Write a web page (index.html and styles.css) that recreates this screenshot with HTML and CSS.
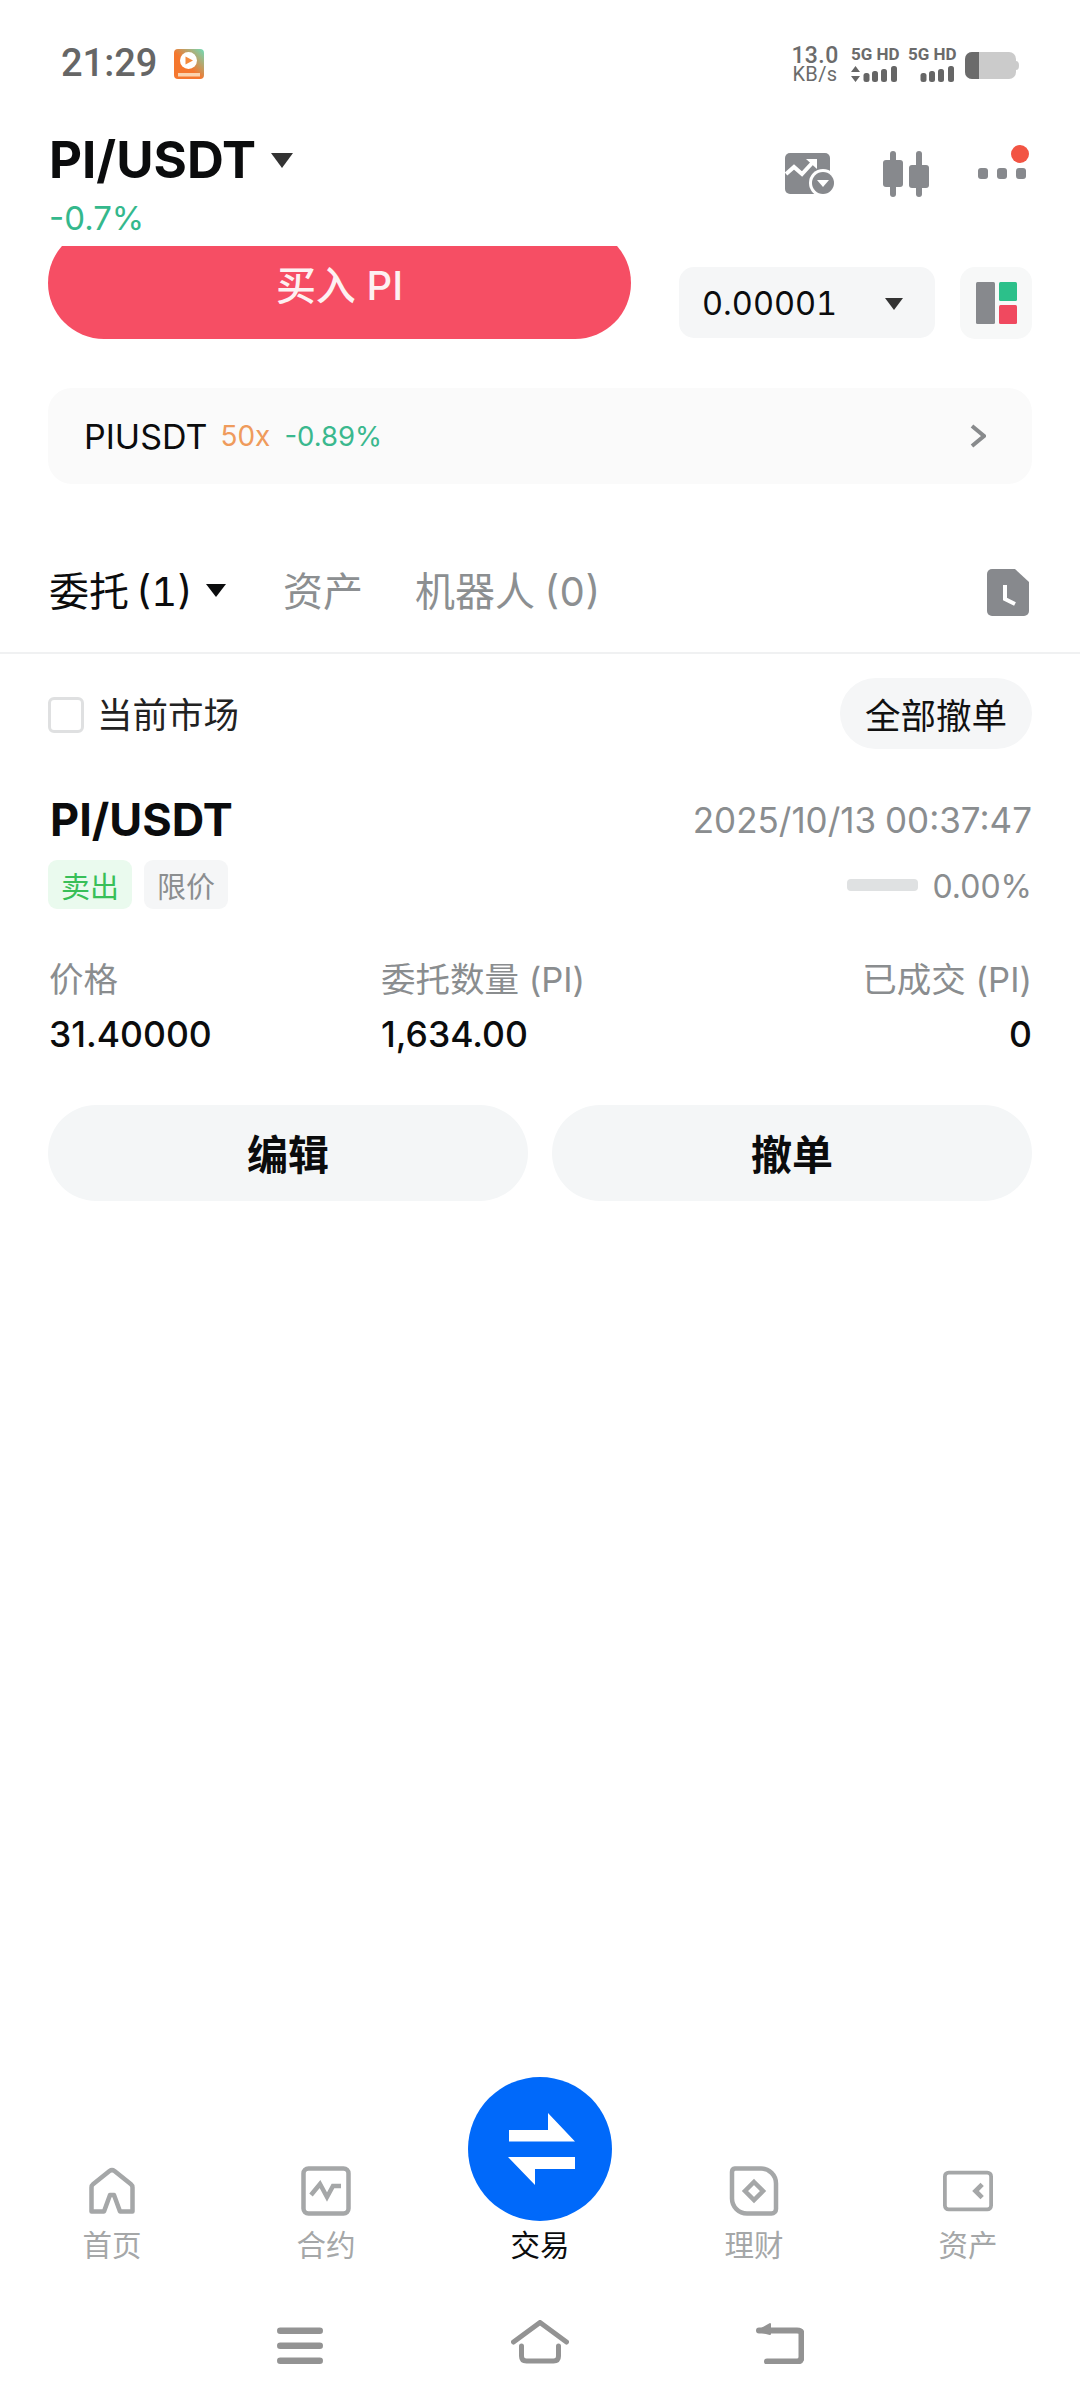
FILE: index.html
```html
<!DOCTYPE html>
<html lang="zh">
<head>
<meta charset="utf-8">
<title>PI/USDT</title>
<link rel="stylesheet" href="styles.css">
</head>
<body>
<div class="page">
  <header class="status">
    <span class="clock">21:29</span>
    <svg class="app-icon" viewBox="0 0 30 30">
      <defs><linearGradient id="appg" x1="0" y1="1" x2="1" y2="0"><stop offset="0.45" stop-color="#f5772e"/><stop offset="1" stop-color="#6fdcb8"/></linearGradient></defs>
      <rect width="30" height="30" rx="4" fill="url(#appg)"/>
      <circle cx="14.5" cy="11.5" r="8.5" fill="#fff"/>
      <path d="M11.5 7.5 19 11.5 11.5 15.5Z" fill="#f58a3c"/>
      <rect x="4" y="24" width="22" height="3.5" fill="#fbd3ae"/>
    </svg>
    <div class="status-right">
      <div class="speed"><span>13.0</span><span class="speed-unit">KB/s</span></div>
      <div class="sim">
        <span class="sim-label">5G HD</span>
        <svg class="sig" viewBox="0 0 47 16"><path d="M4.500 0 9 6H0ZM4.500 16 0 10H9Z" fill="#666"/><rect x="12.500" y="7" width="6" height="9" rx="2.500" fill="#666"/><rect x="21" y="5" width="6" height="11" rx="2.500" fill="#666"/><rect x="30" y="3" width="6" height="13" rx="2.500" fill="#666"/><rect x="40" y="0" width="6" height="16" rx="2.500" fill="#666"/></svg>
      </div>
      <div class="sim">
        <span class="sim-label">5G HD</span>
        <svg class="sig" viewBox="0 0 47 16"><rect x="12.500" y="7" width="6" height="9" rx="2.500" fill="#666"/><rect x="21" y="5" width="6" height="11" rx="2.500" fill="#666"/><rect x="30" y="3" width="6" height="13" rx="2.500" fill="#666"/><rect x="40" y="0" width="6" height="16" rx="2.500" fill="#666"/></svg>
      </div>
      <svg class="battery" viewBox="0 0 54 27"><rect width="51" height="27" rx="7" fill="#cbcbcb"/><path d="M7 0H14V27H7A7 7 0 0 1 0 20V7A7 7 0 0 1 7 0Z" fill="#6b6b6b"/><path d="M51 9a3 4.500 0 0 1 0 9Z" fill="#cbcbcb"/></svg>
    </div>
  </header>

  <section class="market">
    <div class="market-info">
      <div class="pair"><h1 class="pair-name">PI/USDT</h1><i class="tri tri-lg"></i></div>
      <div class="pair-change">-0.7%</div>
    </div>
    <div class="tools">
      <svg class="tool-chart" viewBox="0 0 50 45">
        <rect y="2" width="45" height="41" rx="5" fill="#87898d"/>
        <path d="M1 23 9 16 17 23 29 10" fill="none" stroke="#fff" stroke-width="4"/>
        <path d="M21 8H32V18Z" fill="#fff"/>
        <circle cx="38" cy="32" r="14" fill="#fff"/><circle cx="38" cy="32" r="11" fill="#87898d"/>
        <path d="M32 29H44L38 36Z" fill="#fff"/>
      </svg>
      <svg class="tool-candle" viewBox="0 0 46 46">
        <g fill="#87898d"><rect x="7" width="6" height="46" rx="3"/><rect y="9" width="20" height="27" rx="3"/><rect x="33" width="6" height="46" rx="3"/><rect x="26" y="14" width="20" height="23" rx="3"/></g>
      </svg>
      <div class="tool-more"><i class="dot"></i><i class="dot"></i><i class="dot"></i><i class="badge"></i></div>
    </div>
  </section>

  <section class="trade">
    <div class="buy-clip"><button class="buy">买入 PI</button></div>
    <div class="select"><span>0.00001</span><i class="tri tri-md"></i></div>
    <div class="layout-btn">
      <svg viewBox="0 0 41 42"><rect width="19" height="42" rx="1.500" fill="#87898d"/><rect x="23" width="18" height="19" rx="1.500" fill="#2cc08a"/><rect x="23" y="23" width="18" height="19" rx="1.500" fill="#f0495f"/></svg>
    </div>
  </section>

  <a class="contract">
    <span class="contract-name">PIUSDT</span>
    <span class="contract-lev">50x</span>
    <span class="contract-chg">-0.89%</span>
    <svg class="chev" viewBox="0 0 16 24"><path d="M2 2 14 12 2 22" fill="none" stroke="#888a8c" stroke-width="4"/></svg>
  </a>

  <nav class="tabs">
    <span class="tab tab-on">委托 (1)</span><i class="tri tri-tab"></i>
    <span class="tab tab-assets">资产</span>
    <span class="tab tab-bots">机器人 (0)</span>
    <svg class="doc" viewBox="0 0 42 47"><path d="M5 0H28L42 13V42A5 5 0 0 1 37 47H5A5 5 0 0 1 0 42V5A5 5 0 0 1 5 0Z" fill="#87898d"/><path d="M18 16V30L28 35" fill="none" stroke="#fff" stroke-width="4"/></svg>
  </nav>

  <section class="filter">
    <label class="check"><i class="box"></i><span class="check-label">当前市场</span></label>
    <button class="cancel-all">全部撤单</button>
  </section>

  <section class="order">
    <div class="order-head">
      <div>
        <div class="order-pair">PI/USDT</div>
        <div class="tags"><span class="tag tag-sell">卖出</span><span class="tag tag-type">限价</span></div>
      </div>
      <div class="order-side">
        <div class="order-time">2025/10/13 00:37:47</div>
        <div class="progress"><i class="bar"></i><span class="progress-val">0.00%</span></div>
      </div>
    </div>
    <div class="fields">
      <span class="f-label">价格</span><span class="f-label">委托数量 (PI)</span><span class="f-label f-end">已成交 (PI)</span>
      <span class="f-val">31.40000</span><span class="f-val">1,634.00</span><span class="f-val f-end">0</span>
    </div>
    <div class="actions"><button class="act">编辑</button><button class="act">撤单</button></div>
  </section>

  <div class="spacer"></div>

  <nav class="bottom">
    <div class="item">
      <svg class="nav-i" viewBox="0 0 50 50"><path d="M4.500 45.500V21.500Q4.500 19.500 6 18.300L22.500 5Q25 3.200 27.500 5L44 18.300Q45.500 19.500 45.500 21.500V45.500H33L27 29H23L17 45.500Z" fill="none" stroke="#a5a7a8" stroke-width="4.500" stroke-linejoin="round"/></svg>
      <span>首页</span>
    </div>
    <div class="item">
      <svg class="nav-i" viewBox="0 0 50 50"><rect x="2.500" y="2.500" width="45" height="45" rx="5" fill="none" stroke="#a5a7a8" stroke-width="4.500"/><path d="M10 29 19 18 26 31 32 20H40" fill="none" stroke="#a5a7a8" stroke-width="4.500"/></svg>
      <span>合约</span>
    </div>
    <div class="item item-on">
      <div class="swap">
        <svg viewBox="0 0 144 144"><path d="M41 53H80V36L107 64.500H41Z" fill="#fff"/><path d="M107 78H40L67 106V90H107Z" fill="#fff" transform="translate(0 2)"/></svg>
      </div>
      <span>交易</span>
    </div>
    <div class="item">
      <svg class="nav-i" viewBox="0 0 50 50"><path d="M6 2.500H32A15 15 0 0 1 47 17.500V43A4.500 4.500 0 0 1 42.500 47.500H18A15 15 0 0 1 3 32.500V6A3.500 3.500 0 0 1 6 2.500Z" fill="none" stroke="#a5a7a8" stroke-width="4.500"/><path d="M25 16 34 25 25 34 16 25Z" fill="none" stroke="#a5a7a8" stroke-width="4.500"/></svg>
      <span>理财</span>
    </div>
    <div class="item">
      <svg class="nav-i nav-wide" viewBox="0 0 53 50"><rect x="2" y="5.500" width="49" height="39" rx="4" fill="none" stroke="#a5a7a8" stroke-width="4"/><path d="M41.500 18 34.500 25 41.500 32" fill="none" stroke="#a5a7a8" stroke-width="5"/></svg>
      <span>资产</span>
    </div>
  </nav>

  <footer class="sys">
    <svg class="sys-menu" viewBox="0 0 46 43"><g fill="#939393"><rect y="7" width="46" height="6.500" rx="3.250"/><rect y="22" width="46" height="6.500" rx="3.250"/><rect y="37" width="46" height="6.500" rx="3.250"/></g></svg>
    <svg class="sys-home" viewBox="0 0 58 44"><path d="M2.500 22 29 2.500 55.500 22M10.500 26V36Q10.500 41 15.500 41H42.500Q47.500 41 47.500 36V26" fill="none" stroke="#939393" stroke-width="5" stroke-linecap="round"/></svg>
    <svg class="sys-back" viewBox="0 0 48 42"><path d="M11 39.500H41Q45.500 39.500 45.500 35V12Q45.500 8.500 41 8.500H3" fill="none" stroke="#939393" stroke-width="6" stroke-linecap="round"/><path d="M2 9 14 2V12Z" fill="#939393" stroke="#939393" stroke-width="2" stroke-linejoin="round"/></svg>
  </footer>
</div>
</body>
</html>
```
FILE: styles.css
```css
* { box-sizing: border-box; }
html, body { margin: 0; padding: 0; background: #fff; }
body { font-family: "Inter", "Noto Sans CJK SC", "Liberation Sans", sans-serif; color: #0b0c0d; }
button { font: inherit; border: 0; padding: 0; color: inherit; }
i { display: block; }
h1 { margin: 0; }
svg { display: block; flex: none; }

.page { width: 1080px; height: 2408px; display: flex; flex-direction: column; overflow: hidden; }

/* status bar */
.status { height: 100px; padding: 41px 61px 0 61px; display: flex; align-items: flex-start; }
.clock { font: 500 38px/45px "Roboto", sans-serif; color: #666; }
.app-icon { width: 30px; height: 30px; margin: 8px 0 0 17px; }
.status-right { margin-left: auto; display: flex; align-items: flex-start; margin-top: 5px; }
.speed { width: 44px; display: flex; flex-direction: column; font: 500 23px/20px "Roboto", sans-serif; color: #6b6b6b; align-items: center; letter-spacing: 0.4px; }
.speed-unit { font-size: 20px; line-height: 17px; font-weight: 400; }
.sim { width: 47px; margin-left: 14px; display: flex; flex-direction: column; gap: 4px; }
.sim + .sim { margin-left: 10px; }
.sim-label { font: 700 17px/16px "Roboto", sans-serif; color: #6b6b6b; white-space: nowrap; }
.sig { width: 47px; height: 16px; }
.battery { width: 54px; height: 27px; margin: 6px 0 0 10px; }

/* triangles */
.tri { width: 0; height: 0; border-style: solid; border-color: #333 transparent transparent; border-bottom-width: 0; }
.tri-lg { border-width: 15px 11px 0; margin-left: 15px; }
.tri-md { border-width: 12px 9px 0; margin-left: auto; }
.tri-tab { border-width: 13px 10px 0; border-top-color: #0b0c0d; margin-left: 13px; margin-top: -4px; }

/* market header */
.market { height: 146px; padding: 32px 54px 0 49px; display: flex; justify-content: space-between; }
.pair { display: flex; align-items: center; height: 56px; }
.pair-name { font-size: 51px; line-height: 56px; font-weight: 700; }
.pair-change { margin-top: 10px; font-size: 33px; line-height: 40px; color: #34b88c; }
.tools { display: flex; height: 56px; position: relative; }
.tool-chart { width: 50px; height: 45px; margin-top: 19px; }
.tool-candle { width: 46px; height: 46px; margin: 19px 0 0 48px; }
.tool-more { margin: 36px 0 0 49px; width: 48px; height: 11px; display: flex; justify-content: space-between; position: relative; }
.dot { width: 10px; height: 11px; background: #87898d; border-radius: 3px; }
.badge { position: absolute; right: -3px; top: -23px; width: 18px; height: 18px; border-radius: 50%; background: #f25443; }

/* trade row */
.trade { height: 93px; margin-left: 48px; display: flex; }
.buy-clip { width: 583px; height: 93px; overflow: hidden; }
.buy { display: block; width: 583px; height: 112px; margin-top: -19px; padding-top: 6px; border-radius: 56px; background: #f64e64; color: #fdf1f2; font-size: 40px; font-weight: 500; line-height: 40px; }
.select { width: 256px; height: 71px; margin: 21px 0 0 48px; padding: 2px 32px 0 23px; border-radius: 15px; background: #f5f6f7; display: flex; align-items: center; font-size: 32.500px; font-weight: 400; color: #0b0c0d; font-feature-settings: "tnum" 1; }
.layout-btn { width: 72px; height: 72px; margin: 21px 0 0 25px; border-radius: 15px; background: #f7f8f8; display: flex; align-items: center; justify-content: center; }
.layout-btn svg { width: 41px; height: 42px; }

/* contract link */
.contract { height: 96px; margin: 49px 48px 0; padding: 0 46px 0 36px; display: flex; align-items: center; border-radius: 24px; background: #fafafa; }
.contract-name { font-size: 34px; }
.contract-lev { margin-left: 13px; font-size: 28px; color: #ef9b5c; }
.contract-chg { margin-left: 14px; font-size: 27.500px; color: #3ab88e; }
.chev { width: 16px; height: 24px; margin-left: auto; }

/* tabs */
.tabs { height: 170px; padding: 78px 51px 30px 49px; display: flex; align-items: center; border-bottom: 2px solid #f0f1f2; }
.tab { font-size: 40px; line-height: 60px; color: #8c8f91; white-space: nowrap; font-feature-settings: "tnum" 1; }
.tab-on { color: #0b0c0d; word-spacing: -4px; }
.tab-assets { margin-left: 57px; }
.tab-bots { margin-left: 52px; word-spacing: -2px; }
.doc { width: 42px; height: 47px; margin-left: auto; }

/* filter */
.filter { padding: 24px 48px 0; display: flex; align-items: center; justify-content: space-between; }
.check { display: flex; align-items: center; font-size: 35.500px; color: #222; }
.check-label { margin-top: -2px; }
.box { width: 36px; height: 36px; border: 3px solid #dfe0e1; border-radius: 6px; margin-right: 13px; margin-top: 2px; }
.cancel-all { width: 192px; height: 71px; border-radius: 36px; background: #f5f6f7; font-size: 35.500px; color: #111; }

/* order */
.order { padding: 46px 48px 0; }
.order-head { display: flex; justify-content: space-between; }
.order-pair { font-size: 45px; line-height: 50px; font-weight: 700; padding-left: 2px; }
.tags { display: flex; gap: 12px; margin-top: 15px; }
.tag { width: 84px; height: 49px; border-radius: 9px; display: flex; align-items: center; justify-content: center; font-size: 29px; }
.tag-sell { background: #eafaee; color: #38bf58; }
.tag-type { background: #f5f6f7; color: #8b8e90; }
.order-side { display: flex; flex-direction: column; align-items: flex-end; }
.order-time { font-size: 35px; line-height: 50px; color: #8a8d8f; word-spacing: -1px; }
.progress { height: 49px; margin-top: 15px; display: flex; align-items: center; color: #8a8d8f; font-size: 32px; }
.progress-val { padding-top: 3px; }
.bar { width: 71px; height: 12px; border-radius: 4px; background: #dfe1e2; margin-right: 14px; }

.fields { display: grid; grid-template-columns: 332px 1fr auto; margin-top: 49px; padding-left: 1px; }
.f-label { font-size: 34.500px; line-height: 44px; color: #8a8d8f; }
.f-val { font-size: 35.500px; line-height: 40px; margin-top: 13px; font-weight: 500; color: #0b0c0d; }
.f-end { text-align: right; }

.actions { display: flex; gap: 24px; margin-top: 50px; }
.act { flex: 1; height: 96px; padding-bottom: 3px; border-radius: 48px; background: #f4f6f7; font-size: 41px; font-weight: 700; }

.spacer { flex: 1; }

/* bottom tabs */
.bottom { padding: 0 5px; display: grid; grid-template-columns: repeat(5, 1fr); align-items: end; }
.item { display: flex; flex-direction: column; align-items: center; font-size: 29.500px; line-height: 34px; color: #a5a7a8; }
.nav-i { width: 50px; height: 50px; margin-bottom: 12px; }
.item-on { color: #0b0c0d; }
.swap { width: 144px; height: 144px; border-radius: 50%; background: #0069fa; margin-bottom: 7px; }
.swap svg { width: 144px; height: 144px; }

/* system nav */
.sys { height: 146px; padding: 58px 0 0 277px; display: flex; align-items: flex-start; }
.sys-menu { width: 46px; height: 44px; }
.sys-home { width: 58px; height: 44px; margin-left: 188px; }
.sys-back { width: 48px; height: 42px; margin-left: 187px; margin-top: 2px; }
```
